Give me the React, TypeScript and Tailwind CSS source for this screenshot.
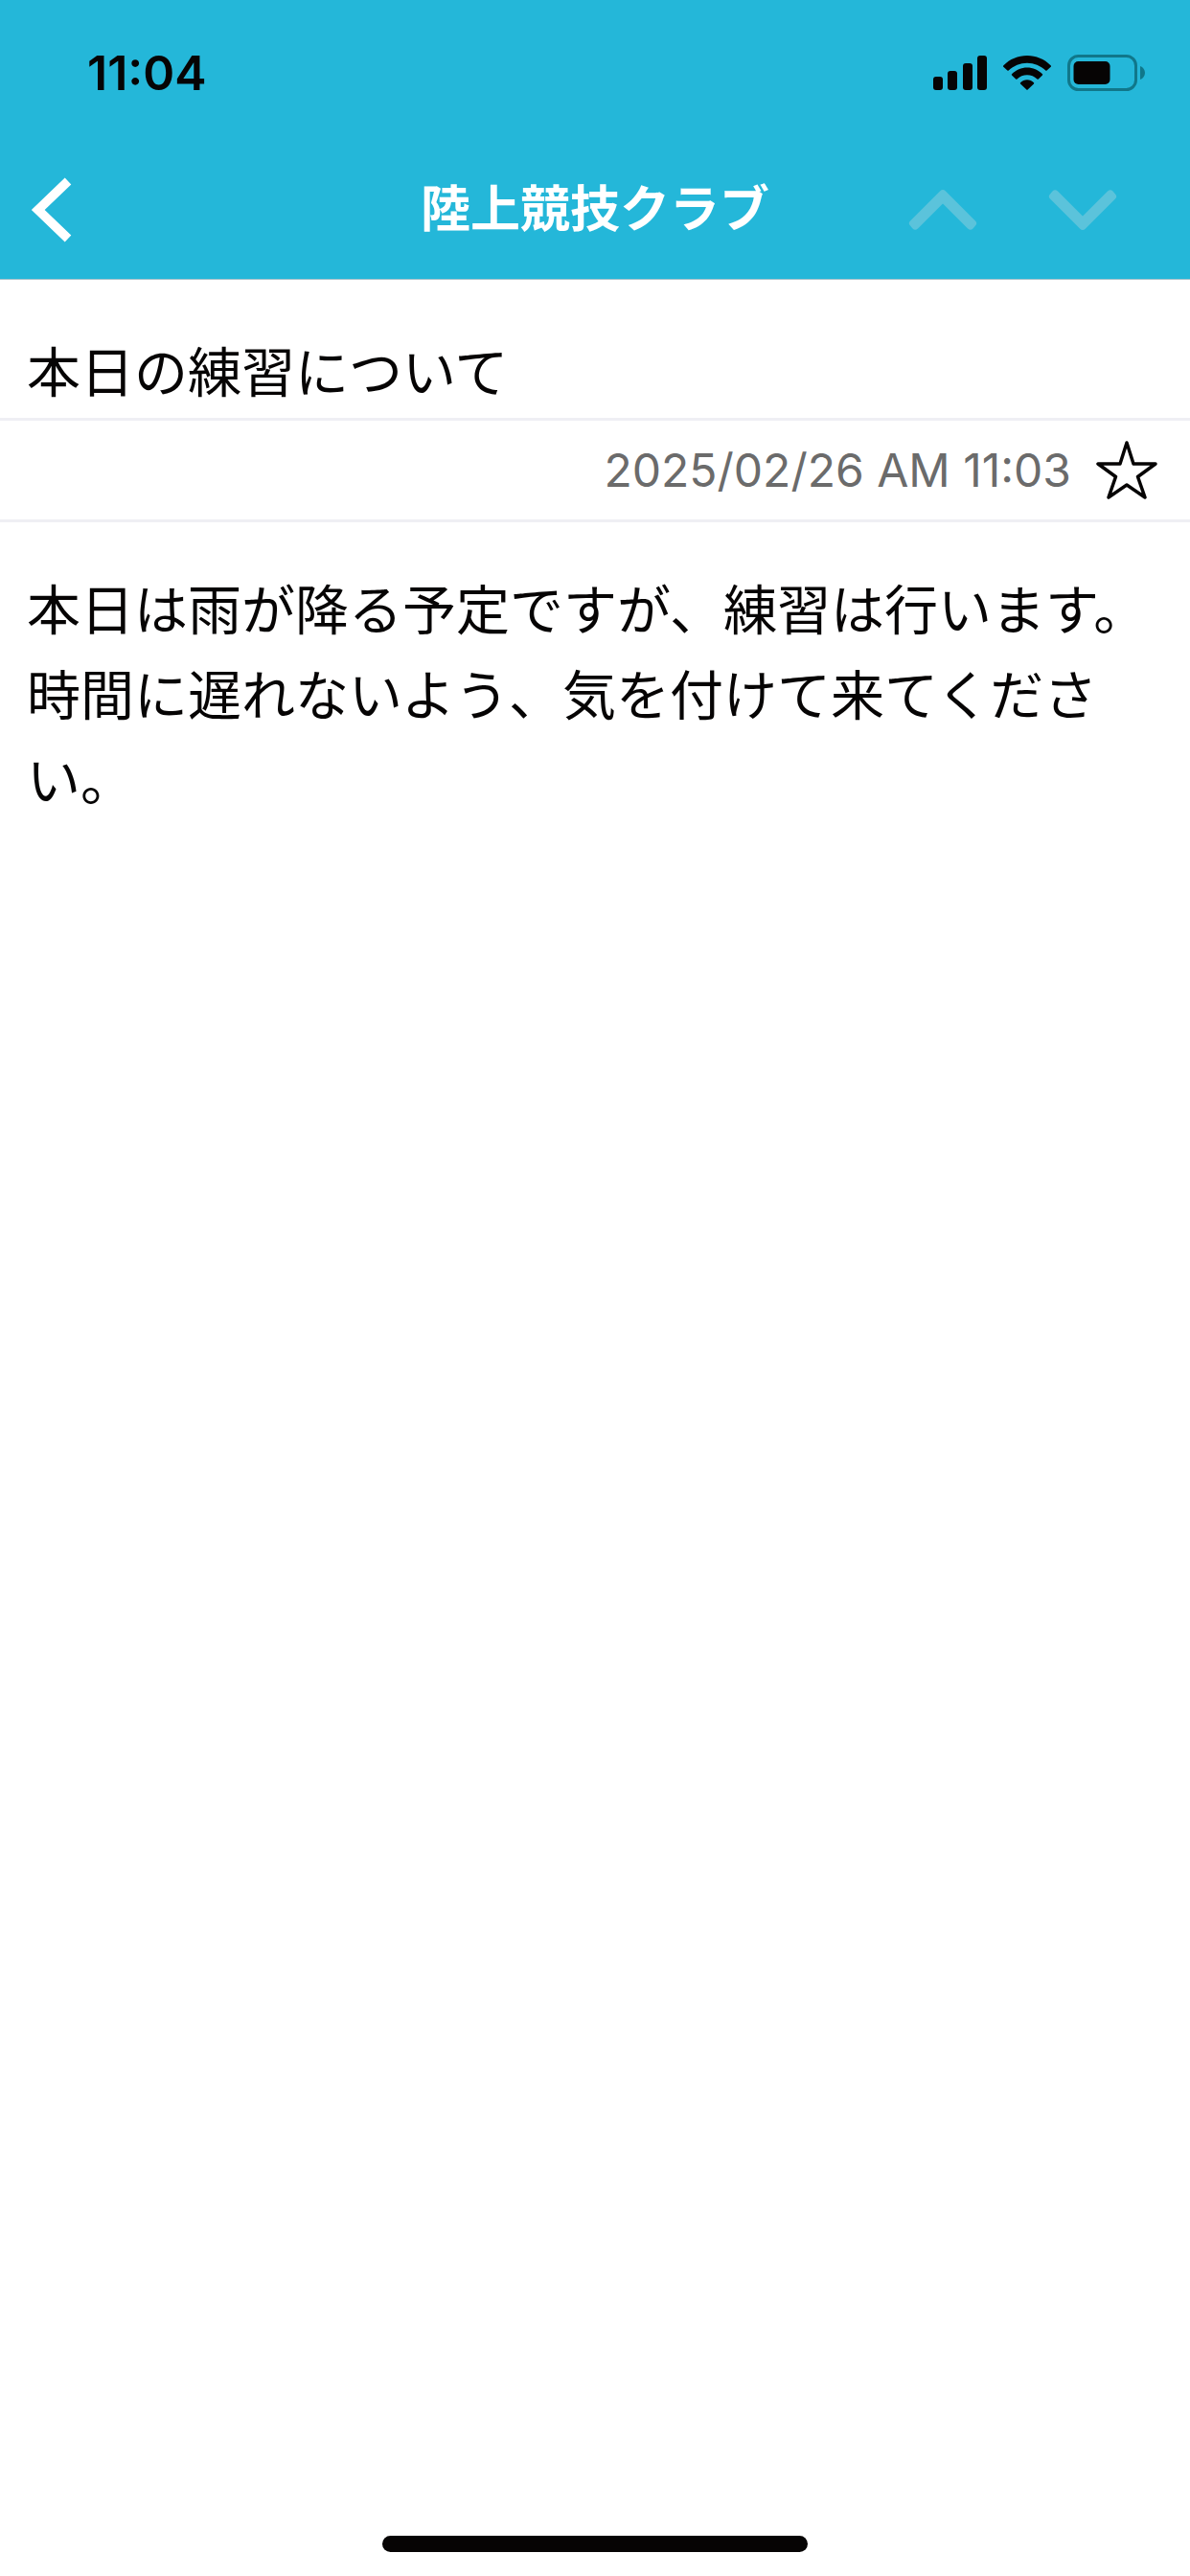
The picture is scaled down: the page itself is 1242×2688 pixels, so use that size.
import React, { useState } from 'react';

const message = {
  club: '陸上競技クラブ',
  title: '本日の練習について',
  date: '2025/02/26 AM 11:03',
  body: '本日は雨が降る予定ですが、練習は行います。時間に遅れないよう、気を付けて来てください。',
};

function StatusIcons() {
  return (
    <div className="flex items-center text-[#060404]">
      <svg className="mr-4 h-9 w-14" viewBox="0 0 56 36" fill="currentColor" aria-hidden="true">
        <rect x="0" y="22" width="10" height="14" rx="3" />
        <rect x="15" y="16" width="10" height="20" rx="3" />
        <rect x="31" y="8" width="10" height="28" rx="3" />
        <rect x="46" y="0" width="10" height="36" rx="3" />
      </svg>
      {/* wifi */}
      <svg className="mr-4 h-9 w-[52px]" viewBox="0 0 52 36" fill="currentColor" aria-hidden="true">
        <path d="M1 11.5C1 11 1 10.600 1.400 10.200C8 3.700 16.600 0 26 0S44 3.700 50.600 10.200C51 10.600 51 11 51 11.500L46.600 15.500C46.200 15.900 45.700 15.900 45.300 15.500C40 10.500 33.300 7.700 26 7.700S12 10.500 6.700 15.500C6.300 15.900 5.800 15.900 5.400 15.500Z" />
        <path d="M10 20.500C9.700 20.200 9.700 19.600 10 19.300C14.300 15 20 12.500 26 12.500S37.700 15 42 19.300C42.300 19.600 42.300 20.200 42 20.500L37.800 24.500C37.400 24.900 36.900 24.900 36.500 24.500C33.700 21.800 30 20.300 26 20.300S18.300 21.800 15.500 24.500C15.100 24.900 14.600 24.900 14.200 24.500Z" />
        <path d="M19 29.500C18.700 29.200 18.700 28.600 19 28.300C20.900 26.300 23.400 25.300 26 25.300S31.100 26.300 33 28.300C33.300 28.600 33.300 29.200 33 29.500L26.600 35.600C26.200 36 25.800 36 25.400 35.600Z" />
      </svg>
      <svg className="h-[38px] w-[82px]" viewBox="0 0 82 38" aria-hidden="true">
        <rect x="1.5" y="1.500" width="70" height="35" rx="10" fill="none" stroke="#10778a" strokeWidth="3" />
        <rect x="6.500" y="7" width="38" height="24" rx="5" fill="currentColor" />
        <path d="M76 12C79 13 81 16 81 19S79 25 76 26Z" fill="#10778a" />
      </svg>
    </div>
  );
}

export default function App() {
  const [starred, setStarred] = useState(false);

  return (
    <div className="flex min-h-screen flex-col bg-white font-['Inter','Noto_Sans_CJK_JP',sans-serif] text-[#060404]">
      <header className="border-b border-[#a9c3cc] bg-[#24b7d9] pb-[5px]">
        <div className="flex h-[152px] items-center justify-between pr-[46px] pl-[91px]">
          <span className="text-[50px] font-semibold">11:04</span>
          <StatusIcons />
        </div>
        <nav className="grid h-[134px] grid-cols-[1fr_auto_1fr] items-center">
          <div className="flex pl-8">
            <button type="button" aria-label="戻る" className="cursor-pointer text-white">
              <svg className="h-[68px] w-11" viewBox="0 0 44 68" fill="none" stroke="currentColor" strokeWidth="9.500">
                <path d="M39 4L7.700 34L39 64" />
              </svg>
            </button>
          </div>
          <h1 className="text-[52px] font-bold text-white">{message.club}</h1>
          <div className="flex justify-end gap-[74px] pr-[76px] text-[#5bc3db]">
            <button type="button" aria-label="前のメッセージ" disabled>
              <svg className="h-11 w-[72px]" viewBox="0 0 72 44" fill="currentColor">
                <path d="M36 1Q37.500 1 38.500 2L70 33.500Q72.500 36 70 38.500L67.500 41.500Q65 44 62 41.500L36 15.500L10 41.500Q7 44 4.500 41.500L2 38.500Q-.5 36 2 33.500L33.500 2Q34.500 1 36 1Z" />
              </svg>
            </button>
            <button type="button" aria-label="次のメッセージ" disabled>
              <svg className="h-11 w-[72px]" viewBox="0 0 72 44" fill="currentColor">
                <path d="M36 43Q37.500 43 38.500 42L70 10.500Q72.500 8 70 5.500L67.500 2.500Q65 0 62 2.500L36 28.500L10 2.500Q7 0 4.500 2.500L2 5.500Q-.5 8 2 10.500L33.500 42Q34.500 43 36 43Z" />
              </svg>
            </button>
          </div>
        </nav>
      </header>

      <main className="flex-1">
        <h2 className="border-b-[3px] border-[#efeff4] px-7 pt-[65px] pb-[15px] text-[56px] leading-[64px] font-normal">
          {message.title}
        </h2>
        <div className="flex h-[106px] items-center justify-end gap-6 border-b-[3px] border-[#efeff4] pr-8">
          <time dateTime="2025-02-26T11:03" className="text-[48px] text-[#6b6b6b]">
            {message.date}
          </time>
          <button
            type="button"
            aria-label="スター"
            aria-pressed={starred}
            onClick={() => setStarred(!starred)}
            className="cursor-pointer"
          >
            <svg
              className="h-16 w-[68px]"
              viewBox="0 0 68 64"
              fill={starred ? 'currentColor' : 'none'}
              stroke="currentColor"
              strokeWidth="3.500"
              strokeLinejoin="round"
            >
              <path d="M34 3L41 25H64L45.500 38.500L53 60L34 47L15 60L22.500 38.500L4 25H27Z" />
            </svg>
          </button>
        </div>
        <p className="px-7 pt-12 text-[56px] leading-[89px] font-normal">{message.body}</p>
      </main>

      {/* home indicator */}
      <footer className="flex justify-center pb-[25px]">
        <div className="h-[17px] w-[444px] rounded-full bg-[#060404]"></div>
      </footer>
    </div>
  );
}
